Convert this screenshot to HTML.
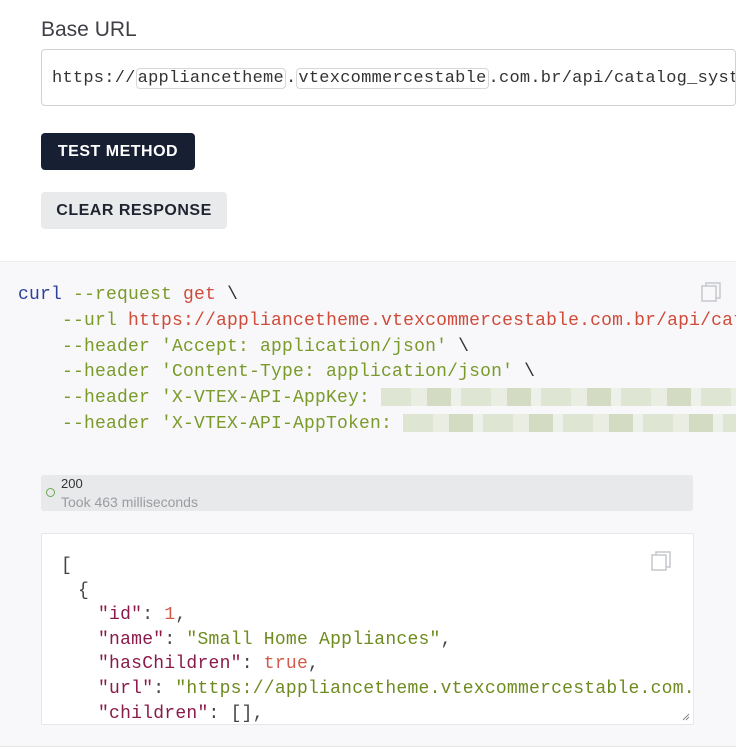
<!DOCTYPE html>
<html><head><style>
body{margin:0;width:750px;height:755px;background:#fff;font-family:"Liberation Sans",sans-serif;overflow:hidden;position:relative}
.abs{position:absolute}
.mono{font-family:"Liberation Mono",monospace}
.lbl{left:41px;top:18px;font-size:21px;color:#3f3f46}
.inp{left:41px;top:49px;width:693px;height:55px;border:1px solid #cfd1d5;border-radius:4px;overflow:hidden;white-space:nowrap}
.inp .t{position:absolute;left:10px;top:17px;font-size:17px;color:#333;line-height:24px;letter-spacing:.25px}
.chip{border:1px solid #d6d7da;border-radius:4px;padding:0 1px}
.btn{left:41px;border-radius:4px;font-weight:bold;font-size:16px;letter-spacing:.5px;text-align:center}
.gray{left:0;top:261px;width:736px;height:484px;background:#f8f8fa;border-top:1px solid #eceef0;border-bottom:1px solid #e5e6e8;overflow:hidden}
.code{left:18px;top:283px;font-size:18px;line-height:25.8px;white-space:pre;color:#7a9a2a;letter-spacing:.2px;width:718px;overflow:hidden}
.blue{color:#2f3f9c}.red{color:#cf4b3a}.grn{color:#6e8b1f}
.blur{display:inline-block;height:18px;vertical-align:middle;background:repeating-linear-gradient(90deg,#dfe5d3 0 30px,#e9ede2 30px 46px,#d3dcc3 46px 70px,#eef0ea 70px 80px)}
.stat{left:41px;top:475px;width:652px;height:36px;background:#e8e9eb;border-radius:3px}
.resp{left:41px;top:533px;width:651px;height:190px;background:#fff;border:1px solid #e6e7ea;border-radius:2px;overflow:hidden}
.json{left:19px;top:20px;font-size:18px;line-height:24.6px;white-space:pre;color:#444;letter-spacing:.25px}
.json div{height:24.6px}
.k{color:#8a1a4a}.s{color:#6e8b1f}.n{color:#d35a4a}
</style></head><body>
<div class="abs lbl">Base URL</div>
<div class="abs inp"><div class="t mono">https://<span class="chip">appliancetheme</span>.<span class="chip">vtexcommercestable</span>.com.br/api/catalog_system</div></div>
<div class="abs btn" style="top:133px;width:154px;height:37px;line-height:37px;background:#172033;color:#fff">TEST METHOD</div>
<div class="abs btn" style="top:192px;width:186px;height:37px;line-height:37px;background:#e9eaec;color:#1f2430">CLEAR RESPONSE</div>
<div class="abs gray">
<svg class="abs" style="left:700px;top:19px" width="22" height="22" viewBox="0 0 22 22" fill="none" stroke="#c5c7cb" stroke-width="1.5"><rect x="2" y="5" width="14" height="15"/><path d="M6 5V2h14v15h-4"/></svg>
</div>
<div class="abs code mono"><span class="blue">curl</span> --request <span class="red">get</span> <span style="color:#333">\</span>
    --url <span class="red">https://appliancetheme.vtexcommercestable.com.br/api/catalog</span>
    --header 'Accept: application/json' <span style="color:#333">\</span>
    --header 'Content-Type: application/json' <span style="color:#333">\</span>
    --header 'X-VTEX-API-AppKey: <span class="blur" style="width:360px"></span>
    --header 'X-VTEX-API-AppToken: <span class="blur" style="width:340px"></span></div>
<div class="abs stat">
<div class="abs" style="left:5px;top:13px;width:7px;height:7px;border:1.3px solid #6aa84f;border-radius:50%"></div>
<div class="abs" style="left:20px;top:1px;font-size:13px;color:#333">200</div>
<div class="abs" style="left:20px;top:19px;font-size:14px;color:#9a9ca1">Took 463 milliseconds</div>
</div>
<div class="abs resp">
<svg class="abs" style="left:608px;top:16px" width="22" height="22" viewBox="0 0 22 22" fill="none" stroke="#c5c7cb" stroke-width="1.5"><rect x="2" y="5" width="14" height="15"/><path d="M6 5V2h14v15h-4"/></svg>
<div class="abs json mono"><div>[</div><div style="padding-left:17px">{</div><div style="padding-left:37px"><span class="k">"id"</span>: <span class="n">1</span>,</div><div style="padding-left:37px"><span class="k">"name"</span>: <span class="s">"Small Home Appliances"</span>,</div><div style="padding-left:37px"><span class="k">"hasChildren"</span>: <span class="n">true</span>,</div><div style="padding-left:37px"><span class="k">"url"</span>: <span class="s">"https://appliancetheme.vtexcommercestable.com.br</span></div><div style="padding-left:37px"><span class="k">"children"</span>: [],</div></div>
<svg class="abs" style="left:640px;top:179px" width="8" height="8" viewBox="0 0 8 8" stroke="#888" stroke-width="1"><path d="M1 7L7 1M4 7L7 4"/></svg>
</div>
</body></html>
